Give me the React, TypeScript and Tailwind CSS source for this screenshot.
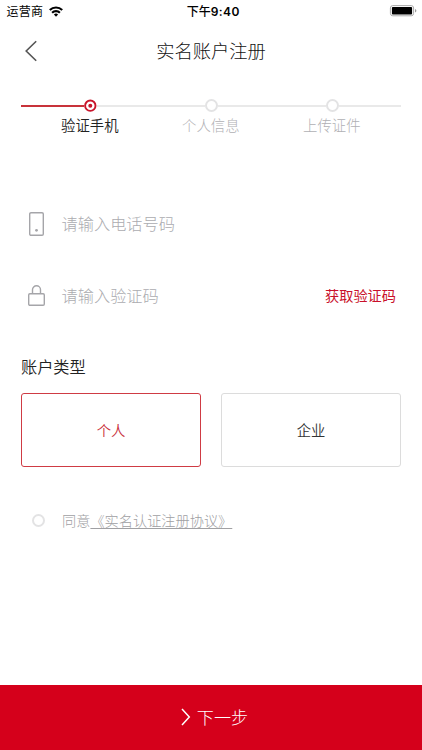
import { useState } from 'react'

const steps = ['验证手机', '个人信息', '上传证件']

const accountTypes = [
  { id: 'personal', label: '个人' },
  { id: 'company', label: '企业' },
]

function StatusBar() {
  return (
    <div className="grid h-[22px] grid-cols-3 items-center pl-[6.5px] pr-[5px] text-[12px] leading-none text-black">
      <div className="flex items-center gap-[6px]">
        <span className="pt-px tracking-[0.3px]">运营商</span>
        <svg className="h-[11px] w-[14px]" viewBox="0 0 14 11" fill="none" stroke="#000" strokeWidth="2.1">
          <path d="M0.8 4.1a8.8 8.8 0 0 1 12.4 0" />
          <path d="M3.1 6.7a5.5 5.5 0 0 1 7.8 0" />
          <path d="M7 10.7L4.9 8.6a3 3 0 0 1 4.2 0z" fill="#000" stroke="none" />
        </svg>
      </div>
      <div className="pl-[3px] pt-px text-center font-medium">
        下午<span className="font-semibold tracking-[0.4px]">9:40</span>
      </div>
      <svg className="h-3 w-7 justify-self-end" viewBox="0 0 28 12">
        <rect x="1.4" y="0.6" width="23.2" height="10.2" rx="2.4" fill="#fff" stroke="#aaa" strokeWidth="1" />
        <rect x="2.9" y="2" width="20.2" height="7.4" rx="1" fill="#000" />
        <path d="M26 3.9c1.9.6 1.9 3 0 3.6z" fill="#999" />
      </svg>
    </div>
  )
}

function Stepper() {
  return (
    <div className="px-[21px]">
      <div className="flex h-[13px] items-center">
        <div className="h-[2px] w-[63px] bg-[#c8323a]" />
        <svg className="h-[13px] w-[13px]" viewBox="0 0 13 13">
          <circle cx="6.3" cy="6.7" r="5.2" fill="#fff" stroke="#c9152b" strokeWidth="1.9" />
          <circle cx="6.3" cy="6.7" r="2" fill="#c9152b" />
        </svg>
        {steps.slice(1).map((step) => (
          <div key={step} className="flex items-center">
            <div className="h-[2px] w-[108px] bg-[#e9e9e9]" />
            <div className="h-[13px] w-[13px] rounded-full border-2 border-[#e3e3e4]" />
          </div>
        ))}
        <div className="h-[2px] flex-1 bg-[#e9e9e9]" />
      </div>
      <div className="flex pl-[8.3px] pt-[4px] text-[14.4px] leading-5">
        {steps.map((step, idx) => (
          <span key={step} className={`w-[121px] text-center ${idx === 0 ? 'font-[350] text-[#222]' : 'font-light text-[#b0b0b4]'}`}>
            {step}
          </span>
        ))}
      </div>
    </div>
  )
}

export default function App() {
  const [accountType, setAccountType] = useState('personal')

  return (
    <div className="flex h-[750px] w-[422px] flex-col overflow-hidden bg-white font-[Inter,'Noto_Sans_CJK_SC',sans-serif]">
      <StatusBar />

      <header className="grid h-[58px] grid-cols-3 items-center pl-[25px] pr-[25px]">
        <svg className="h-[22px] w-[13px]" viewBox="0 0 13 22" fill="none" stroke="#555" strokeWidth="1.6">
          <path d="M11.2 1.2L1.2 11l10 9.8" />
        </svg>
        <h1 className="whitespace-nowrap text-center text-[18.3px] font-light leading-6 text-[#111]">实名账户注册</h1>
      </header>

      <div className="pt-[19px]">
        <Stepper />
      </div>

      <div className="mt-[52px] px-[21px]">
        <div className="flex h-[72px] items-center pl-2">
          <svg className="mr-[17.6px] h-6 w-[15px]" viewBox="0 0 15 24" fill="none" stroke="#a5a5a9" strokeWidth="1.4">
            <rect x="0.7" y="0.7" width="13.6" height="22.6" rx="1.3" />
            <circle cx="7.5" cy="18.3" r="1.4" fill="#a5a5a9" stroke="none" />
          </svg>
          <span className="text-[16.2px] font-light text-[#acacb0]">请输入电话号码</span>
        </div>
        <div className="flex h-[72px] items-center pl-[7px] pr-[5px]">
          <svg className="mb-[2px] mr-[16.6px] h-[21px] w-[17px]" viewBox="0 0 17 21" fill="none" stroke="#a5a5a9" strokeWidth="1.4">
            <rect x="0.7" y="8.7" width="15.6" height="11.6" rx="1.2" />
            <path d="M4.5 8.7V4.8a4 4 0 0 1 8 0v3.9" />
          </svg>
          <span className="text-[16.2px] font-light text-[#acacb0]">请输入验证码</span>
          <button className="ml-auto text-[14.2px] font-normal text-[#c9102b]">获取验证码</button>
        </div>
      </div>

      <div className="mt-[23px] px-[21px]">
        <h2 className="text-[16.2px] font-[350] leading-6 text-[#222]">账户类型</h2>
        <div className="mt-[14px] grid grid-cols-2 gap-5">
          {accountTypes.map((type) => (
            <button
              key={type.id}
              onClick={() => setAccountType(type.id)}
              className={`h-[74px] rounded-[3px] border pt-[2px] text-[14.3px] font-[350] ${
                accountType === type.id ? 'border-[#cf3b44] text-[#c9303c]' : 'border-[#dcdcdc] text-[#333]'
              }`}
            >
              {type.label}
            </button>
          ))}
        </div>
      </div>

      <div className="mt-[42px] flex h-[22px] items-center pl-8 text-[14.2px] font-light text-[#a0a0a3]">
        <div className="mr-[17px] mt-px h-[13px] w-[13px] rounded-full border-2 border-[#e3e3e4]" />
        <span className="pt-px">同意</span>
        <a className="pt-px underline underline-offset-2">《实名认证注册协议》</a>
      </div>

      <button className="mt-auto flex h-[65.5px] items-center justify-center gap-[6px] bg-[#d5001b] pl-[7px] text-[17.1px] font-light text-white">
        <svg className="h-[18px] w-[10px]" viewBox="0 0 10 18" fill="none" stroke="#fff" strokeWidth="1.5">
          <path d="M1 1l7.3 8L1 17" />
        </svg>
        <span className="pt-[2px]">下一步</span>
      </button>
    </div>
  )
}
